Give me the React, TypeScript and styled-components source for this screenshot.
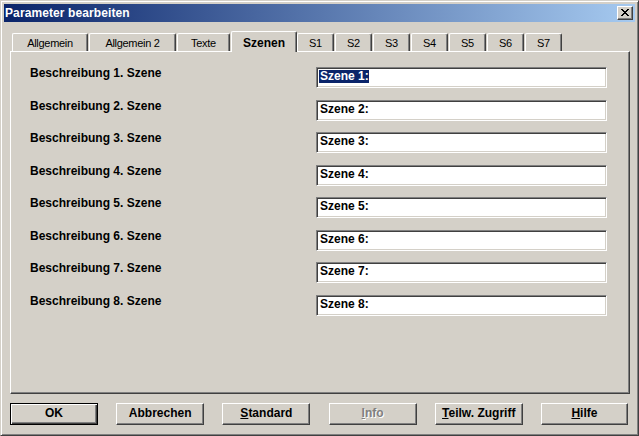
import React from "react";
import styled, { createGlobalStyle } from "styled-components";

const Global = createGlobalStyle`
  html, body { margin: 0; padding: 0; background: #d4d0c8; overflow: hidden; }
  * { box-sizing: border-box; }
`;

const Win = styled.div`
  width: 639px;
  height: 436px;
  background: #d4d0c8;
  border-top: 1px solid #d4d0c8;
  border-left: 1px solid #d4d0c8;
  border-right: 1px solid #404040;
  border-bottom: 1px solid #404040;
  box-shadow: inset 1px 1px #ffffff, inset -1px -1px #808080;
  padding: 3px 3px 3px 3px;
  display: flex;
  flex-direction: column;
  font-family: "Liberation Sans", Arial, sans-serif;
  color: #000;
`;

const TitleBar = styled.div`
  height: 18px;
  background: linear-gradient(to right, #0a246a, #a6caf0);
  display: flex;
  align-items: center;
  justify-content: space-between;
  padding: 0 2px 0 1px;
`;

const TitleText = styled.span`
  color: #fff;
  font-weight: bold;
  font-size: 12px;
  line-height: 18px;
  letter-spacing: 0.1px;
`;

const CloseBtn = styled.div`
  width: 16px;
  height: 14px;
  background: #d4d0c8;
  border-top: 1px solid #fff;
  border-left: 1px solid #fff;
  border-right: 1px solid #404040;
  border-bottom: 1px solid #404040;
  box-shadow: inset -1px -1px #808080;
  display: flex;
  align-items: center;
  justify-content: center;
  padding: 0 1px 1px 0;
`;

const Body = styled.div`
  display: flex;
  flex-direction: column;
  padding: 9px 5px 0 6px;
`;

const TabStrip = styled.div`
  display: flex;
  align-items: flex-end;
  height: 20px;
  padding-left: 2px;
  position: relative;
  z-index: 2;
`;

const Tab = styled.div<{ $w: number; $active?: boolean }>`
  width: ${(p) => p.$w}px;
  height: ${(p) => (p.$active ? 21 : 18)}px;
  margin-right: ${(p) => (p.$active ? 0 : 1)}px;
  margin-bottom: ${(p) => (p.$active ? -1 : 0)}px;
  background: #d4d0c8;
  border-top: 1px solid #fff;
  border-left: 1px solid #fff;
  border-right: 1px solid #404040;
  border-top-left-radius: 2px;
  border-top-right-radius: 2px;
  box-shadow: inset -1px 0 #808080;
  font-size: ${(p) => (p.$active ? 12 : 11)}px;
  font-weight: ${(p) => (p.$active ? "bold" : "normal")};
  letter-spacing: ${(p) => (p.$active ? 0 : -0.3)}px;
  line-height: 13px;
  text-align: center;
  padding-top: ${(p) => (p.$active ? 5 : 3)}px;
  white-space: nowrap;
`;

const Panel = styled.div`
  width: 620px;
  height: 343px;
  border-top: 1px solid #fff;
  border-left: 1px solid #fff;
  border-right: 1px solid #404040;
  border-bottom: 1px solid #404040;
  box-shadow: inset -1px -1px #808080;
  padding: 15px 0 0 19px;
  position: relative;
  z-index: 1;
`;

const Grid = styled.div`
  display: grid;
  grid-template-columns: 286px 291px;
  grid-auto-rows: 21px;
  row-gap: 11.5px;
`;

const Label = styled.div`
  font-size: 12px;
  font-weight: bold;
  line-height: 13px;
  white-space: nowrap;
`;

const Field = styled.div`
  background: #fff;
  border-top: 1px solid #808080;
  border-left: 1px solid #808080;
  border-right: 1px solid #fff;
  border-bottom: 1px solid #fff;
  box-shadow: inset 1px 1px #404040, inset -1px -1px #d4d0c8;
  padding: 2px 0 0 2px;
  font-size: 12px;
  font-weight: bold;
  line-height: 13px;
  white-space: nowrap;
`;

const FieldText = styled.span<{ $sel?: boolean }>`
  display: inline-block;
  height: 13px;
  line-height: 13px;
  padding-left: 1px;
  background: ${(p) => (p.$sel ? "#0a246a" : "transparent")};
  color: ${(p) => (p.$sel ? "#fff" : "#000")};
`;

const ButtonRow = styled.div`
  display: flex;
  justify-content: space-between;
  margin-top: 9px;
  padding-right: 2px;
`;

const Button = styled.div<{ $w: number; $default?: boolean; $disabled?: boolean }>`
  width: ${(p) => p.$w}px;
  height: 22px;
  background: #d4d0c8;
  border-top: 1px solid ${(p) => (p.$default ? "#000" : "#fff")};
  border-left: 1px solid ${(p) => (p.$default ? "#000" : "#fff")};
  border-right: 1px solid ${(p) => (p.$default ? "#000" : "#404040")};
  border-bottom: 1px solid ${(p) => (p.$default ? "#000" : "#404040")};
  box-shadow: ${(p) =>
    p.$default
      ? "inset 1px 1px #fff, inset -1px -1px #404040, inset -2px -2px #808080"
      : "inset -1px -1px #808080"};
  font-size: 12px;
  font-weight: bold;
  line-height: 13px;
  display: flex;
  align-items: center;
  justify-content: center;
  padding-bottom: 1px;
  color: ${(p) => (p.$disabled ? "#808080" : "#000")};
  text-shadow: ${(p) => (p.$disabled ? "1px 1px #fff" : "none")};
  white-space: nowrap;
`;

const tabs: { label: string; w: number; active?: boolean }[] = [
  { label: "Allgemein", w: 76 },
  { label: "Allgemein 2", w: 87 },
  { label: "Texte", w: 53 },
  { label: "Szenen", w: 66, active: true },
  { label: "S1", w: 37 },
  { label: "S2", w: 37 },
  { label: "S3", w: 37 },
  { label: "S4", w: 37 },
  { label: "S5", w: 37 },
  { label: "S6", w: 37 },
  { label: "S7", w: 37 },
];

const CloseGlyph = () => (
  <svg width="8" height="7" viewBox="0 0 8 7" shapeRendering="crispEdges">
    <path
      fill="#000"
      d="M0 0h2v1H0zM6 0h2v1H6zM1 1h2v1H1zM5 1h2v1H5zM2 2h4v1H2zM3 3h2v1H3zM2 4h4v1H2zM1 5h2v1H1zM5 5h2v1H5zM0 6h2v1H0zM6 6h2v1H6z"
    />
  </svg>
);

export default function App() {
  const rows = [1, 2, 3, 4, 5, 6, 7, 8];
  return (
    <>
      <Global />
      <Win>
        <TitleBar>
          <TitleText>Parameter bearbeiten</TitleText>
          <CloseBtn>
            <CloseGlyph />
          </CloseBtn>
        </TitleBar>
        <Body>
          <TabStrip>
            {tabs.map((t) => (
              <Tab key={t.label} $w={t.w} $active={t.active}>
                {t.label}
              </Tab>
            ))}
          </TabStrip>
          <Panel>
            <Grid>
              {rows.map((n) => (
                <React.Fragment key={n}>
                  <Label>Beschreibung {n}. Szene</Label>
                  <Field>
                    <FieldText $sel={n === 1}>Szene {n}:</FieldText>
                  </Field>
                </React.Fragment>
              ))}
            </Grid>
          </Panel>
          <ButtonRow>
            <Button $w={88} $default>
              OK
            </Button>
            <Button $w={88}>Abbrechen</Button>
            <Button $w={88}>
              <span>
                <u>S</u>tandard
              </span>
            </Button>
            <Button $w={88} $disabled>
              <span>
                <u>I</u>nfo
              </span>
            </Button>
            <Button $w={88}>
              <span>
                <u>T</u>eilw. Zugriff
              </span>
            </Button>
            <Button $w={87}>
              <span>
                <u>H</u>ilfe
              </span>
            </Button>
          </ButtonRow>
        </Body>
      </Win>
    </>
  );
}
